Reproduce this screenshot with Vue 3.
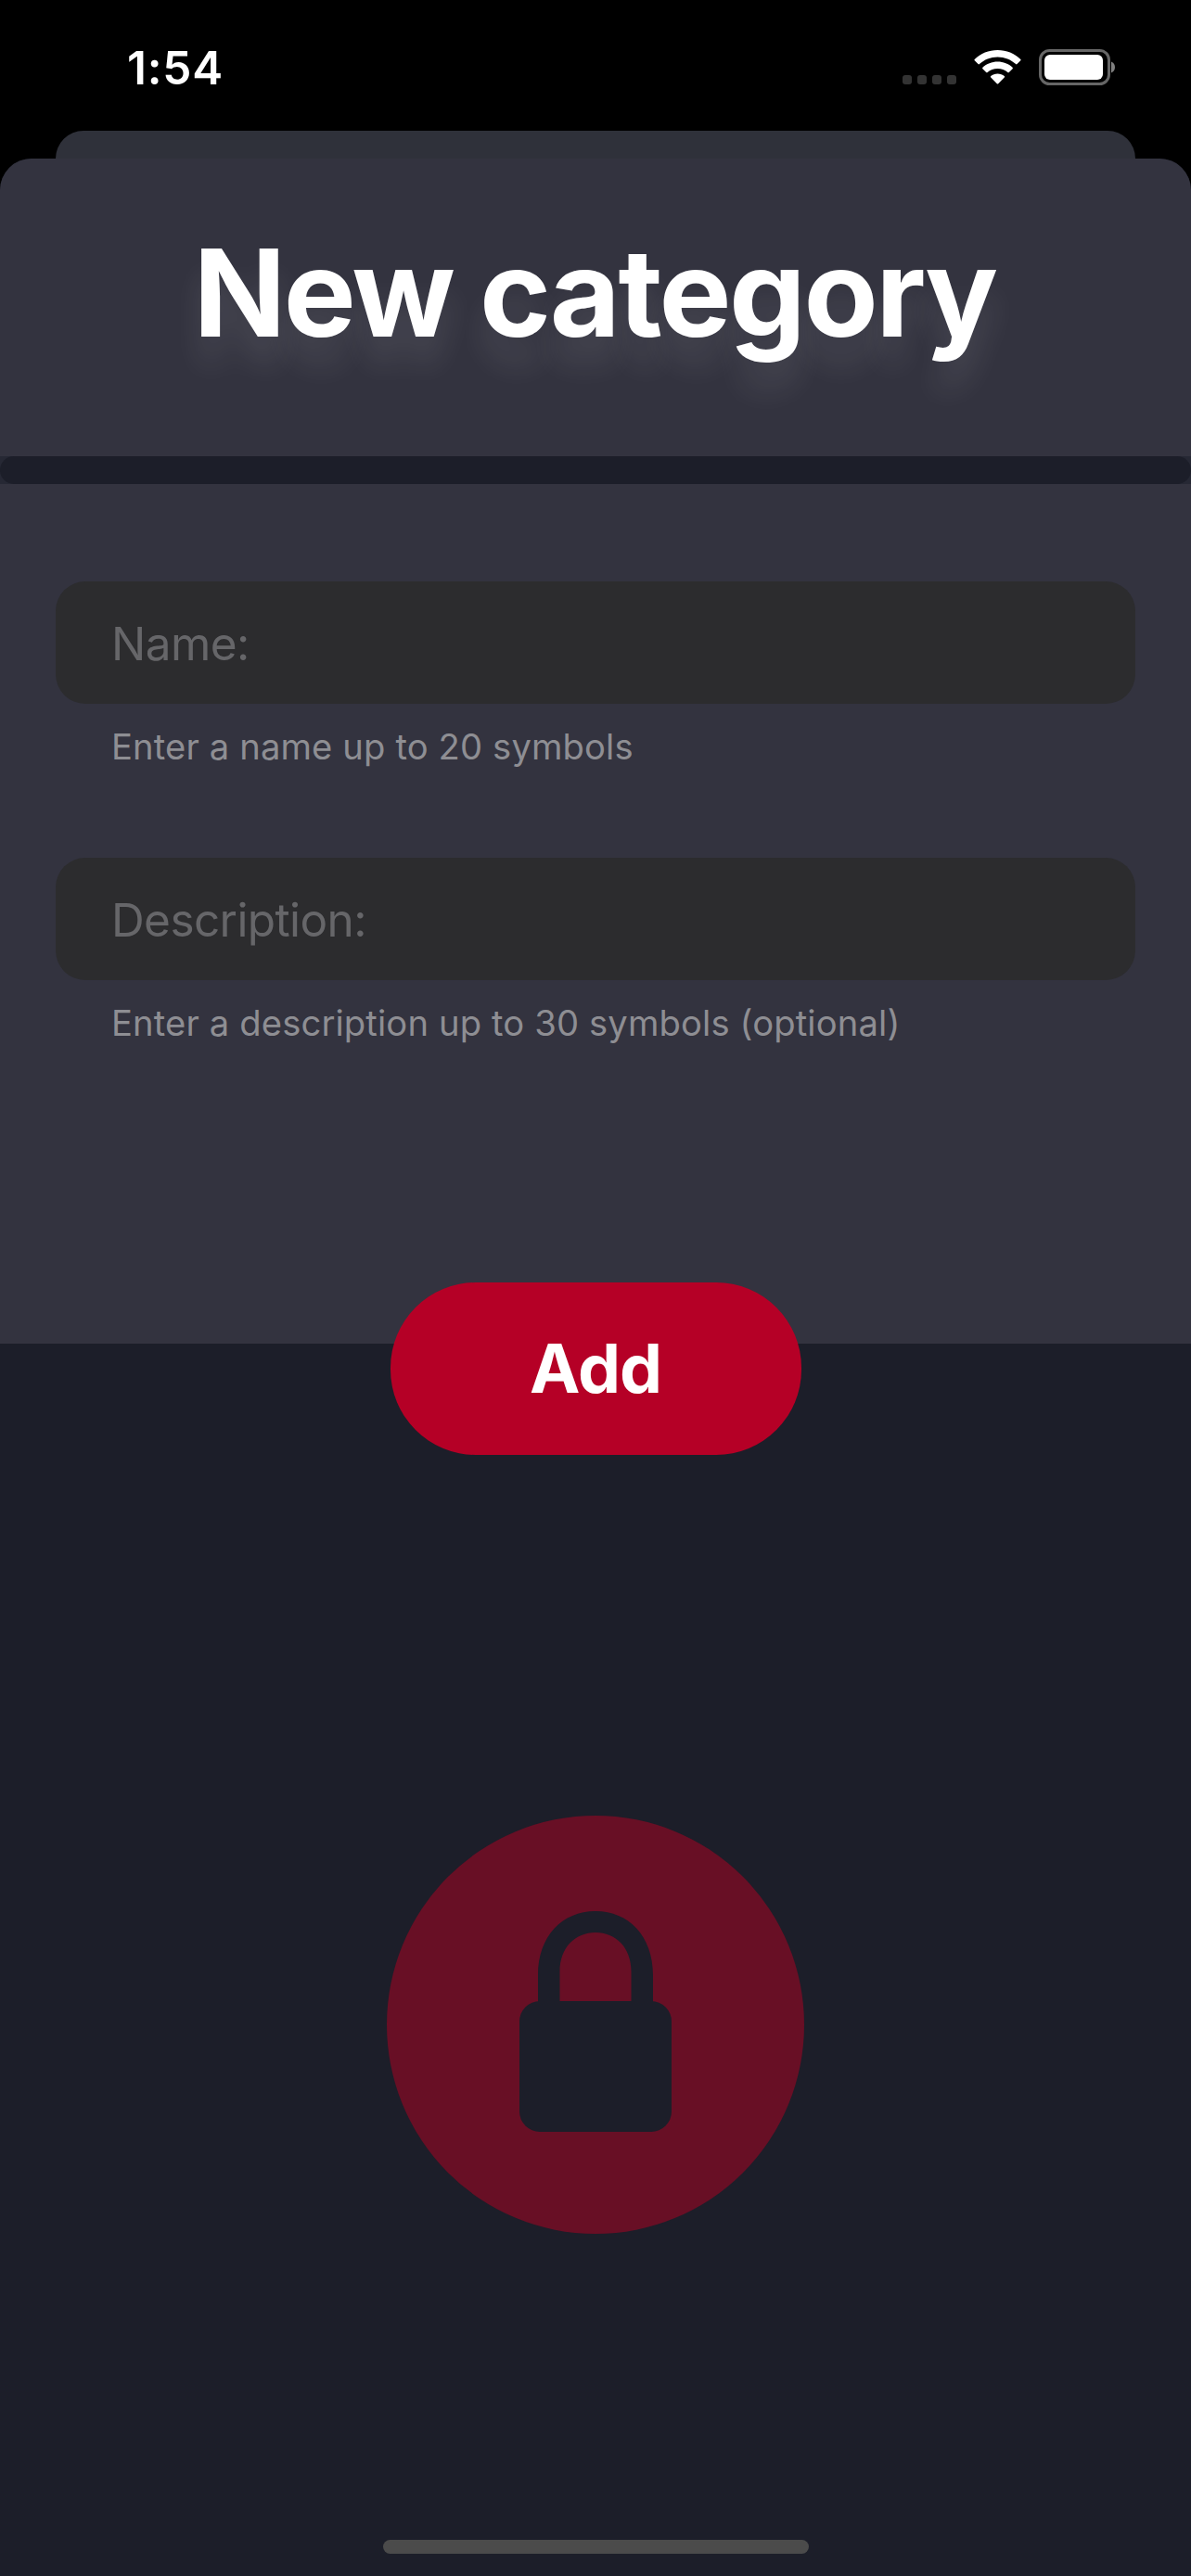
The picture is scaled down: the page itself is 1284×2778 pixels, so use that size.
<script setup>
const fields = [
  { label: 'Name:', hint: 'Enter a name up to 20 symbols' },
  { label: 'Description:', hint: 'Enter a description up to 30 symbols (optional)' },
]
</script>

<template>
  <div class="screen">
    <header class="status">
      <span class="time">1:54</span>
      <svg class="indicators" width="232" height="42" viewBox="0 0 232 42">
        <g fill="#333">
          <rect x="1" y="29" width="10" height="10" rx="3" />
          <rect x="17" y="29" width="10" height="10" rx="3" />
          <rect x="33" y="29" width="10" height="10" rx="3" />
          <rect x="49" y="29" width="10" height="10" rx="3" />
        </g>
        <g fill="#fff">
          <path d="M103.500 2C94 2 85.200 5.700 78.700 11.900Q78 12.600 78.700 13.300L82.500 17.100Q83.200 17.700 83.900 17.100C89.100 12.300 96 9.500 103.500 9.500S117.900 12.300 123.100 17.100Q123.800 17.700 124.500 17.100L128.300 13.300Q129 12.600 128.300 11.900C121.800 5.700 113 2 103.500 2Z" />
          <path d="M103.500 14.600C97.300 14.600 91.700 16.900 87.400 20.800Q86.700 21.500 87.400 22.200L91.200 25.900Q91.900 26.500 92.600 25.900C95.500 23.400 99.300 21.900 103.500 21.900S111.500 23.400 114.400 25.900Q115.100 26.500 115.800 25.900L119.600 22.200Q120.300 21.500 119.600 20.800C115.300 16.900 109.700 14.600 103.500 14.600Z" />
          <path d="M103.500 27.500C100.700 27.500 98.200 28.400 96.200 29.900Q95.400 30.600 96.200 31.400L102.800 38.200Q103.500 38.800 104.200 38.200L110.800 31.400Q111.600 30.600 110.800 29.900C108.800 28.400 106.300 27.500 103.500 27.500Z" />
        </g>
        <rect x="149.500" y="2.500" width="74" height="36" rx="10" fill="none" stroke="#666" stroke-width="3" />
        <rect x="154" y="7" width="63" height="27" rx="6" fill="#fff" />
        <path d="M226 14.500C228.500 15.500 230 17.800 230 20.500S228.500 25.500 226 26.500Z" fill="#808080" />
      </svg>
    </header>

    <div class="sheet-behind"></div>

    <main class="sheet">
      <section class="head"><h1>New category</h1></section>
      <div class="divider"><div class="divider-fill"></div></div>
      <section class="form">
        <div v-for="f in fields" :key="f.label" class="field">
          <div class="input">{{ f.label }}</div>
          <p class="hint">{{ f.hint }}</p>
        </div>
      </section>
      <section class="lower">
        <button class="add">Add</button>
        <svg class="lock" width="450" height="451" viewBox="0 0 450 451">
          <ellipse cx="225" cy="225.500" rx="225" ry="225.500" fill="#680f25" />
          <rect x="143" y="200" width="164" height="141" rx="22" fill="#1c1e29" />
          <path d="M163 206V172C163 130 189 103 225 103S287 130 287 172V206H263.500V168C263.500 142 246.500 126 225 126S186.500 142 186.500 168V200H263.500V206Z" fill="#1c1e29" />
        </svg>
        <div class="home"></div>
      </section>
    </main>
  </div>
</template>

<style>
body { margin: 0; background: #000; }
</style>

<style scoped>
.screen {
  width: 1284px;
  height: 2778px;
  display: flex;
  flex-direction: column;
  background: #000;
  font-family: Inter, "Liberation Sans", sans-serif;
  color: #fff;
  overflow: hidden;
}
.status {
  height: 141px;
  box-sizing: border-box;
  display: flex;
  justify-content: space-between;
  padding: 52px 80px 0 137px;
}
.time { font-size: 49.5px; line-height: 42px; font-weight: 600; letter-spacing: .8px; }
.indicators { display: block; }
.sheet-behind { height: 30px; margin: 0 60px; background: #2f313a; border-radius: 30px 30px 0 0; }
.sheet {
  flex: 1;
  display: flex;
  flex-direction: column;
  background: #1c1e29;
  border-radius: 34px 34px 0 0;
  overflow: hidden;
}
.head { height: 321px; background: #33333f; text-align: center; }
h1 {
  margin: 0;
  padding: 65px 2px 0 0;
  font-size: 131px;
  line-height: 160px;
  font-weight: 700;
  letter-spacing: -2.5px;
  white-space: nowrap;
  text-shadow: 0 30px 32px rgba(255, 255, 255, .1);
}
.divider { height: 30px; background: #262834; }
.divider-fill { height: 30px; border-radius: 15px; background: #1c1e29; }
.form { height: 927px; box-sizing: border-box; padding: 105px 60px 0; background: #33333f; }
.field { height: 298px; }
.input {
  height: 132px;
  line-height: 134px;
  padding-left: 60px;
  border-radius: 32px;
  background: #2c2c2e;
  color: #666669;
  font-size: 49.5px;
  letter-spacing: -.6px;
}
.hint {
  margin: 23px 0 0 60px;
  font-size: 38.2px;
  line-height: 46px;
  letter-spacing: .13px;
  color: #8e8e93;
}
.lower { flex: 1; display: flex; flex-direction: column; align-items: center; }
.add {
  width: 443px;
  height: 186px;
  margin-top: -66px;
  padding: 0;
  border: 0;
  border-radius: 92px;
  background: #b50026;
  color: #fff;
  font: 700 73px/184px Inter, "Liberation Sans", sans-serif;
  letter-spacing: -1px;
}
.lock { display: block; margin-top: 389px; }
.home { width: 459px; height: 15px; margin-top: 330px; border-radius: 8px; background: #4b4b4b; }
</style>
